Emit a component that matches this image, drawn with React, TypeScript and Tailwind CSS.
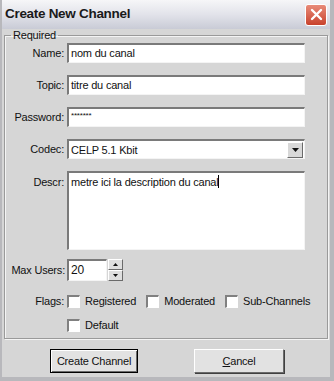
import React from "react";

const font = { fontFamily: '"Liberation Sans", Arial, sans-serif' };

function Field({ label, children, top = false }: { label: string; children: React.ReactNode; top?: boolean }) {
  return (
    <div className={`flex ${top ? "items-start" : "items-center"}`}>
      <div className={`w-[62px] shrink-0 text-right pr-[3px] ${top ? "pt-[3px]" : ""}`}>{label}</div>
      {children}
    </div>
  );
}

function Sunken({ className = "", children }: { className?: string; children?: React.ReactNode }) {
  return (
    <div className={`border-t-2 border-l-2 border-t-[#7a7a7a] border-l-[#7a7a7a] border-b border-r border-b-[#f4f4f4] border-r-[#f4f4f4] bg-white ${className}`}>
      {children}
    </div>
  );
}

function Check({ label }: { label: string }) {
  return (
    <div className="flex items-center gap-[5px] whitespace-nowrap">
      <div className="w-[13px] h-[13px] shrink-0 bg-white border-t-2 border-l-2 border-t-[#808080] border-l-[#808080] border-b border-r border-b-white border-r-white" />
      <span>{label}</span>
    </div>
  );
}

export default function App() {
  return (
    <div className="w-[334px] h-[381px] bg-[#d6d6d6] text-[11px] tracking-[-0.2px] text-[#111] flex flex-col border-l-2 border-r-4 border-b-4 border-[#b8b8bc] overflow-hidden" style={font}>
      <div className="h-[29px] shrink-0 flex items-center justify-between pl-[3px] pr-[3px] bg-gradient-to-b from-[#f6f6f8] via-[#e2e3ea] to-[#c9cbd6]">
        <span className="font-bold text-[13.5px] text-[#1a1a1a] tracking-[-0.3px]">Create New Channel</span>
        <div className="w-[22px] h-[22px] rounded-[3px] border border-white bg-gradient-to-b from-[#e88a78] to-[#c8412c] flex items-center justify-center">
          <svg width="13" height="13" viewBox="0 0 13 13">
            <path d="M2 2 L11 11 M11 2 L2 11" stroke="white" strokeWidth="2.4" strokeLinecap="round" />
          </svg>
        </div>
      </div>

      <fieldset className="mx-[2px] mt-[0px] border border-[#9a9a9a] shadow-[inset_1px_1px_0_#f4f4f4,1px_1px_0_#f4f4f4] pl-[0px] pr-[16px] pb-[6px] pt-[2px]">
        <legend className="ml-[6px] px-[2px] leading-[12px]">Required</legend>
        <div className="flex flex-col gap-[12px]">
          <Field label="Name:">
            <Sunken className="w-[238px] h-[20px] pl-[2px] leading-[16px]">nom du canal</Sunken>
          </Field>
          <Field label="Topic:">
            <Sunken className="w-[238px] h-[20px] pl-[2px] leading-[16px]">titre du canal</Sunken>
          </Field>
          <Field label="Password:">
            <Sunken className="w-[238px] h-[20px] pl-[2px] leading-[14px] text-[8px]">*******</Sunken>
          </Field>
          <Field label="Codec:">
            <Sunken className="w-[238px] h-[20px] pl-[2px] flex items-center justify-between pr-[1px]">
              <span className="leading-[16px]">CELP 5.1 Kbit</span>
              <div className="w-[16px] h-[16px] bg-[#d8d8d8] border border-t-white border-l-white border-b-[#6a6a6a] border-r-[#6a6a6a] flex items-center justify-center">
                <svg width="7" height="4" viewBox="0 0 7 4"><path d="M0 0 H7 L3.5 4 Z" fill="#111" /></svg>
              </div>
            </Sunken>
          </Field>
          <Field label="Descr:" top>
            <Sunken className="w-[238px] h-[79px] pl-[2px] pt-[2px] leading-[14px]">
              metre ici la description du canal<span className="inline-block w-[1px] h-[13px] bg-black align-[-2px]" />
            </Sunken>
          </Field>
          <div className="flex items-center -mt-[3px]">
            <div className="w-[62px] shrink-0 text-right pr-[2px]">Max Users:</div>
            <Sunken className="w-[40px] h-[22px] pl-[2px] leading-[18px] text-[12px]">20</Sunken>
            <div className="flex flex-col ml-[1px]">
              <div className="w-[15px] h-[11px] bg-[#dedede] border border-t-white border-l-white border-b-[#6a6a6a] border-r-[#6a6a6a] flex items-center justify-center">
                <svg width="5" height="3" viewBox="0 0 5 3"><path d="M0 3 H5 L2.5 0 Z" fill="#111" /></svg>
              </div>
              <div className="w-[15px] h-[11px] bg-[#dedede] border border-t-white border-l-white border-b-[#6a6a6a] border-r-[#6a6a6a] flex items-center justify-center">
                <svg width="5" height="3" viewBox="0 0 5 3"><path d="M0 0 H5 L2.5 3 Z" fill="#111" /></svg>
              </div>
            </div>
          </div>
          <div className="flex items-start mt-[1px]">
            <div className="w-[62px] shrink-0 text-right pr-[3px] leading-[14px]">Flags:</div>
            <div className="flex flex-col gap-[10px] leading-[14px]">
              <div className="flex gap-[10px]">
                <Check label="Registered" />
                <Check label="Moderated" />
                <Check label="Sub-Channels" />
              </div>
              <Check label="Default" />
            </div>
          </div>
        </div>
      </fieldset>

      <div className="flex gap-[56px] pl-[48px] mt-[10px]">
        <button className="w-[88px] h-[24px] border border-black bg-[#e2e2e2] shadow-[inset_1px_1px_0_#fff,inset_-1px_-1px_0_#6a6a6a]">
          Create Channel
        </button>
        <button className="w-[90px] h-[24px] bg-[#e2e2e2] border border-t-white border-l-white border-b-[#6a6a6a] border-r-[#6a6a6a] shadow-[1px_1px_0_#404040]">
          <span className="underline">C</span>ancel
        </button>
      </div>
    </div>
  );
}
